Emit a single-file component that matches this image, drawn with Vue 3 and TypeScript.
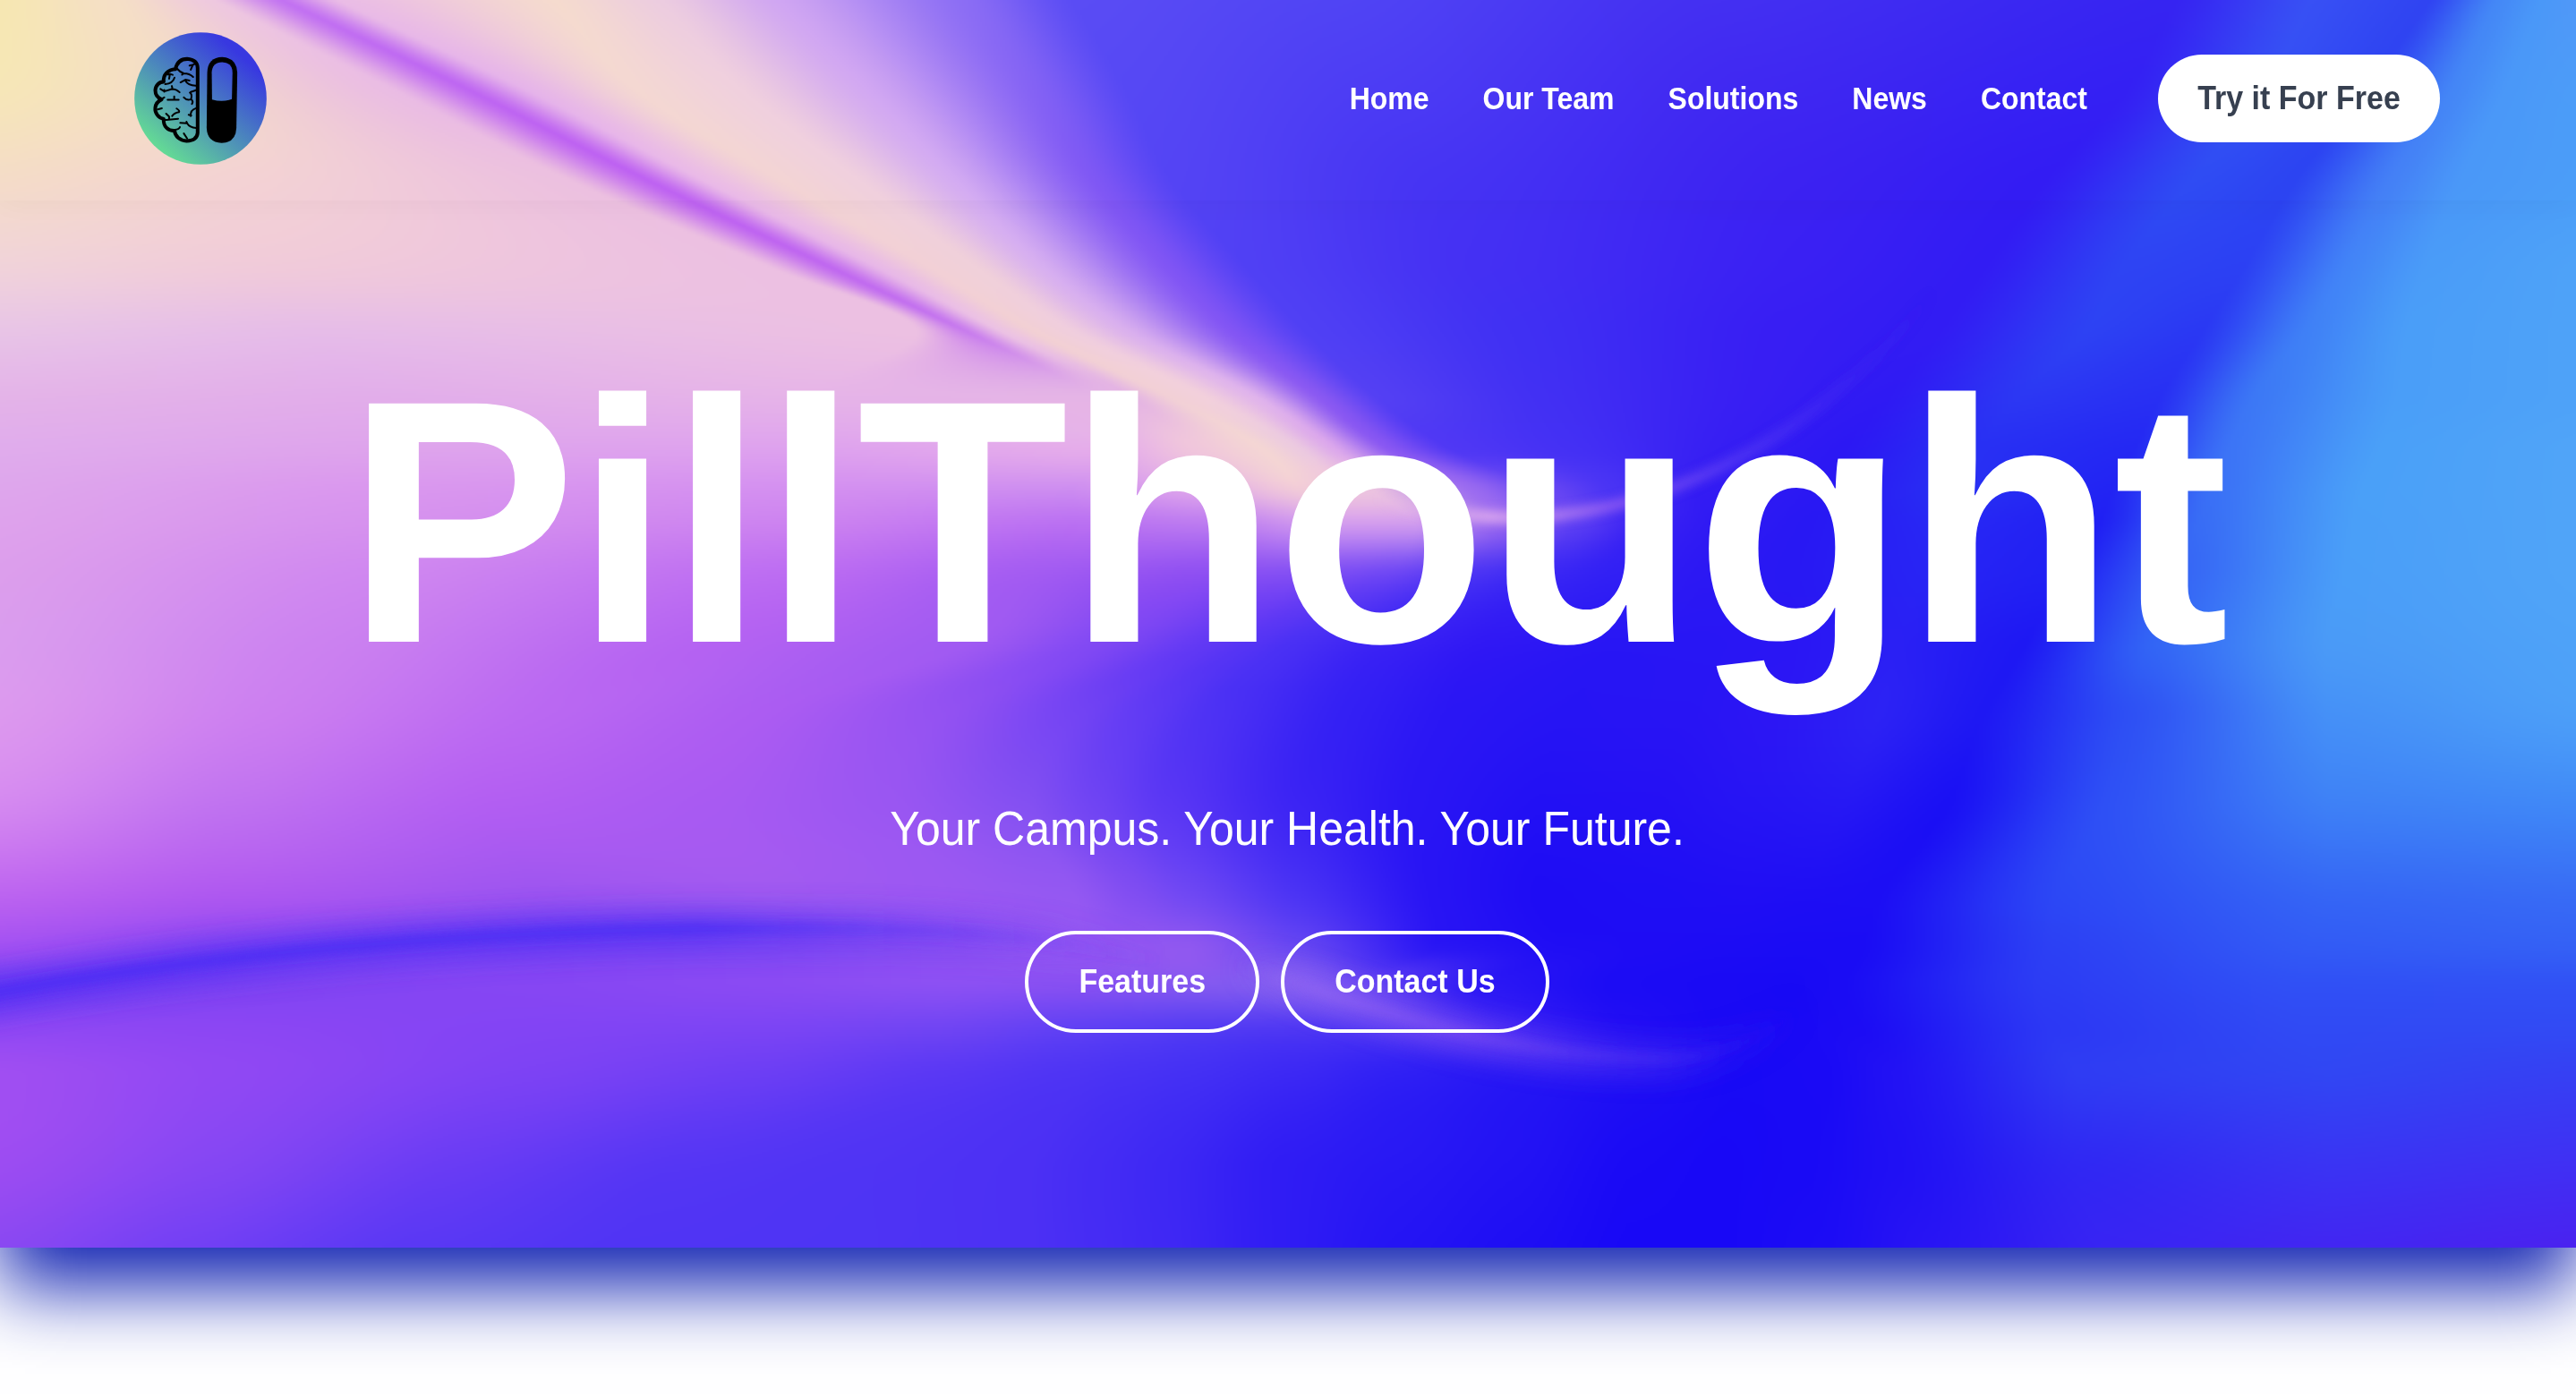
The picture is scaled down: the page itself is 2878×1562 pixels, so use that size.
<script setup lang="ts">
import { onMounted, ref } from 'vue'

const navItems: string[] = ['Home', 'Our Team', 'Solutions', 'News', 'Contact']
const actions: string[] = ['Features', 'Contact Us']

// Gradient mesh: every row holds the same number of "position:colour" stops,
// so a stop can wander sideways from row to row and form a diagonal fold.
const W = 2878
const H = 1393
const mesh: [number, string][] = [
  [0, '0:f6e7b2 130:f5dfc6 240:eec8e0 316:c272f2 378:eabce6 620:f5dbce 740:eccce0 870:d0a6f2 1084:8a6cf4 1200:5a4cf4 1500:5044f4 1900:4430f2 2430:3624f2 2580:3850f4 2715:3044f2 2790:4488f6 2840:4a98f8 2878:5098f8'],
  [100, '0:f6e6b8 200:f4dcc8 440:eabce4 524:be66f2 590:e6b4ea 710:f4d8d2 830:f0d0de 970:d2a8f2 1157:8462f4 1260:5648f4 1540:4c3cf4 1950:4028f2 2375:3420f3 2530:3450f4 2645:2e44f2 2740:4486f6 2800:4a98f8 2878:4c9cf8'],
  [200, '0:f4dcc8 280:f3d2d4 635:ecc0e0 722:be62f2 785:eabae8 870:f3d4d4 960:f0d0de 1065:d4acf2 1221:8058f4 1310:5444f4 1600:4634f3 2000:3c22f2 2285:331cf3 2450:2f4cf3 2565:2c44f2 2670:4480f6 2750:4a98f8 2878:4b9df8'],
  [300, '0:f0d2da 300:f0cada 865:ecc0e2 932:c068f0 985:e8b8e8 1040:f2d0d6 1095:f0d0da 1166:d8b0f0 1304:8256f4 1396:5040f4 1650:4430f3 2000:3a20f3 2215:321cf3 2370:2e44f3 2505:2c40f3 2620:4284f7 2710:4a9cf8 2878:4ea2f8'],
  [370, '0:e8c4e6 350:e6bce8 1025:ecc0e2 1080:c87cee 1120:ecc2e4 1155:f2d0d4 1200:f0cede 1262:dab0ee 1375:8456f4 1460:5040f4 1700:4030f3 1980:381ef3 2165:321cf3 2330:2d42f3 2460:2a38f3 2575:3f80f6 2690:4a9ef8 2878:4ea2f8'],
  [440, '0:e4b4e8 400:e2aeea 900:e6b4e8 1215:e4b4e6 1258:e4b4e4 1300:f2d0d6 1342:f2d0dc 1398:e0b4ec 1468:8c5af2 1535:5440f3 1720:4230f3 1960:381ef3 2110:2f1af3 2260:2c38f3 2415:2830f3 2520:3c78f5 2680:4a9ef8 2878:4ea2f8'],
  [500, '0:e0acec 400:dea4ec 900:dea2ee 1250:e6aeea 1330:f0c6dc 1410:f4d6d4 1450:eccae0 1490:dca8ec 1550:8a58f2 1620:5038f4 1760:4430f4 1930:361ef3 2060:2c18f3 2210:2830f3 2385:2428f3 2490:3c74f6 2660:4aa0f8 2878:50a4f8'],
  [545, '0:dea6ec 400:da98ee 900:d490f0 1200:ce8ef0 1340:e0a8ea 1450:f2ccd8 1490:f0c8dc 1530:ecc4e0 1640:9c6cf0 1720:6a48f3 1800:4a34f4 1900:341cf3 2040:2a18f3 2190:2830f3 2360:2224f3 2470:3a70f6 2640:4aa0f8 2878:50a4f8'],
  [585, '0:dea2ec 400:d692ee 900:cc82f0 1200:ba70f2 1360:bc7cf0 1480:d29cee 1530:d29cee 1580:d09cee 1680:9464f0 1760:5c3ef3 1830:3c24f3 1910:301af3 2020:2818f3 2170:2828f4 2345:2020f3 2455:386cf5 2630:4a9ff8 2878:50a4f8'],
  [640, '0:dc9eec 400:d088f0 900:bc6cf2 1150:a45cf2 1330:9050f2 1450:8450f3 1500:7a4cf4 1550:7048f4 1650:4c34f4 1720:3c28f4 1800:3220f4 1900:2c18f3 2000:2818f3 2150:2824f4 2310:2020f3 2430:3564f5 2620:4a9ef8 2878:50a4f8'],
  [720, '0:da9cee 350:cc82f0 800:b462f2 1080:a05af2 1230:8048f3 1350:6038f4 1395:5534f4 1440:4a30f4 1550:3a22f4 1660:3018f4 1800:2816f4 1900:2816f4 2000:2a16f4 2120:2a20f4 2262:1e18f3 2400:3264f5 2600:4a9af7 2878:4ea2f8'],
  [800, '0:dc98ee 300:cc7ef0 600:ba68f2 850:ac5cf2 1050:9452f2 1200:7444f3 1275:613bf4 1350:4e32f4 1500:3420f4 1620:2a16f4 1750:2614f4 1880:2814f4 1980:2c16f4 2100:2c22f4 2215:1e18f3 2380:2e50f4 2600:4590f7 2878:4c9ef8'],
  [900, '0:d488f0 250:c072f0 550:b25ef2 800:a85af2 1000:9a56f2 1150:8450f2 1225:7044f3 1300:5c38f4 1450:3c24f4 1580:2a16f4 1720:2210f4 1850:2410f4 1950:2614f4 2060:2618f4 2175:1a10f4 2350:2e50f5 2600:3e80f6 2878:4088f7'],
  [1000, '0:bc64f0 250:ae58f0 600:9c54f0 850:a05af0 1050:9c58f2 1200:9458f2 1265:824ef2 1330:7048f3 1450:4c34f4 1600:2814f4 1720:1e0cf4 1850:1e0ef4 1950:200ef4 2020:1e0ef4 2100:1c0ef4 2300:2c48f5 2600:3566f5 2878:386cf5'],
  [1060, '0:a050f2 250:8c48f2 600:8446f3 850:864af3 1050:8e50f2 1200:9658f2 1265:9357f1 1330:9058f0 1450:6848f2 1600:2c18f4 1740:200ef4 1840:1e0cf4 1930:1c0cf4 2010:1a0cf4 2080:1a0cf4 2290:2c40f4 2580:325af5 2878:3460f5'],
  [1100, '0:8046f2 250:8244f2 600:8646f3 850:8a4af3 1050:8c50f3 1200:8850f2 1265:8654f1 1330:8458f0 1430:805cf0 1520:6444f2 1660:2c18f4 1800:1c0cf4 1920:1a0af4 2000:180af4 2060:1a0cf4 2280:2c3cf4 2560:3050f5 2878:3152f5'],
  [1150, '0:9048f3 250:8c46f3 600:8244f4 850:7c44f4 1050:7044f3 1200:6040f4 1265:5a3ef4 1330:543cf3 1430:5038f3 1540:4c34f4 1680:3820f4 1820:220ef4 1920:1a0af4 2010:1a0af5 2080:1c0cf4 2290:2c38f4 2570:304af4 2878:324af4'],
  [1200, '0:a04ef2 250:9048f3 600:7c42f4 850:6c3ef4 1050:5a38f4 1200:4e34f4 1265:4932f4 1330:4430f4 1450:3c28f4 1560:3020f4 1700:2616f4 1840:1e0ef4 1940:180af5 2040:1a0af5 2120:2212f4 2320:2f3cf3 2600:3146f3 2878:3640f3'],
  [1300, '0:9c4cf2 250:8446f3 500:6a3cf4 750:5636f4 950:5034f4 1150:4c30f4 1225:452cf4 1300:3e28f4 1430:301cf4 1560:2818f4 1700:2212f4 1820:1a0af5 1920:1808f6 2020:190af5 2120:2010f4 2320:3028f3 2600:3a34f3 2878:4030f3'],
  [1393, '0:8a48f2 200:7440f4 450:5a38f4 700:5034f4 950:4e34f4 1150:4c30f4 1225:462cf4 1300:4028f4 1430:301cf4 1560:2414f4 1700:1e0ef4 1820:1808f6 1920:1808f6 2040:1c0cf5 2150:2814f4 2350:3824f3 2600:4226f2 2878:4a22f0'],
]

interface Stop { x: number; c: number[] }

const rows: { y: number; stops: Stop[] }[] = mesh.map(([y, text]) => ({
  y,
  stops: text.split(' ').map((part) => {
    const [x, hex] = part.split(':')
    return { x: Number(x), c: [0, 2, 4].map((i) => parseInt(hex.slice(i, i + 2), 16)) }
  }),
}))

// Tangent at row i, from the slopes of the rows around it.
const slope = (at: (row: number) => number, i: number): number => {
  const a = Math.max(0, i - 1)
  const b = Math.min(rows.length - 1, i + 1)
  return (at(b) - at(a)) / (rows[b].y - rows[a].y)
}

const hermite = (at: (row: number) => number, i: number, t: number): number => {
  const d = rows[i + 1].y - rows[i].y
  const t2 = t * t
  const t3 = t2 * t
  return (
    at(i) * (2 * t3 - 3 * t2 + 1) +
    slope(at, i) * d * (t3 - 2 * t2 + t) +
    at(i + 1) * (3 * t2 - 2 * t3) +
    slope(at, i + 1) * d * (t3 - t2)
  )
}

const between = (v: number, a: number, b: number): number => Math.min(Math.max(a, b), Math.max(Math.min(a, b), v))

const backdrop = ref<HTMLCanvasElement | null>(null)

onMounted(() => {
  const canvas = backdrop.value
  const ctx = canvas?.getContext('2d')
  if (!canvas || !ctx) return
  const w = canvas.width
  const h = canvas.height
  const image = ctx.createImageData(w, h)
  let r = 0
  for (let py = 0; py < h; py++) {
    const y = (py / (h - 1)) * H
    while (r < rows.length - 2 && y > rows[r + 1].y) r++
    const t = (y - rows[r].y) / (rows[r + 1].y - rows[r].y)
    const line: Stop[] = rows[r].stops.map((stop, i) => ({
      x: hermite((n) => rows[n].stops[i].x, r, t),
      c: stop.c.map((v, k) => between(hermite((n) => rows[n].stops[i].c[k], r, t), v, rows[r + 1].stops[i].c[k])),
    }))
    let s = 0
    for (let px = 0; px < w; px++) {
      const x = (px / (w - 1)) * W
      while (s < line.length - 2 && x > line[s + 1].x) s++
      const u = Math.min(1, Math.max(0, (x - line[s].x) / (line[s + 1].x - line[s].x)))
      const e = 0.6 * u + 0.4 * u * u * (3 - 2 * u)
      const o = (py * w + px) * 4
      for (let k = 0; k < 3; k++) image.data[o + k] = line[s].c[k] + (line[s + 1].c[k] - line[s].c[k]) * e
      image.data[o + 3] = 255
    }
  }
  ctx.putImageData(image, 0, 0)
})
</script>

<template>
  <main class="page">
    <section class="hero">
      <canvas ref="backdrop" class="backdrop" width="1439" height="697"></canvas>
      <svg class="backdrop" viewBox="0 0 2878 1393" fill="none" aria-hidden="true">
        <defs>
          <filter id="soft" filterUnits="userSpaceOnUse" x="-200" y="0" width="3200" height="1393"><feGaussianBlur stdDeviation="16" /></filter>
          <filter id="fine" filterUnits="userSpaceOnUse" x="-200" y="0" width="3200" height="1393"><feGaussianBlur stdDeviation="6" /></filter>
          <linearGradient id="arc" gradientUnits="userSpaceOnUse" x1="0" y1="0" x2="1300" y2="0">
            <stop offset="0" stop-color="#4a2cf4" />
            <stop offset=".6" stop-color="#4a2ef4" />
            <stop offset="1" stop-color="#6a40f4" stop-opacity="0" />
          </linearGradient>
          <linearGradient id="glow" gradientUnits="userSpaceOnUse" x1="1540" y1="0" x2="2160" y2="0">
            <stop offset="0" stop-color="#ecc4e6" stop-opacity="0" />
            <stop offset=".2" stop-color="#e4b0ee" />
            <stop offset=".42" stop-color="#9860f2" stop-opacity=".9" />
            <stop offset=".65" stop-color="#5c40f4" stop-opacity=".7" />
            <stop offset="1" stop-color="#4028f4" stop-opacity="0" />
          </linearGradient>
          <linearGradient id="wisp" gradientUnits="userSpaceOnUse" x1="1380" y1="0" x2="2020" y2="0">
            <stop offset="0" stop-color="#9064f2" stop-opacity="0" />
            <stop offset=".15" stop-color="#9468f2" />
            <stop offset=".4" stop-color="#8050f2" />
            <stop offset=".75" stop-color="#5034f2" stop-opacity=".7" />
            <stop offset="1" stop-color="#2c18f4" stop-opacity="0" />
          </linearGradient>
        </defs>
        <path d="M-80 1124C200 1070 500 1042 800 1039S1180 1048 1300 1080" stroke="url(#arc)" stroke-width="38" opacity=".75" filter="url(#soft)" />
        <path d="M-80 1122C200 1068 500 1040 800 1037S1180 1048 1300 1074" stroke="url(#arc)" stroke-width="11" opacity=".85" filter="url(#fine)" />
        <path d="M1540 556Q1610 576 1690 578C1850 576 1980 500 2060 430Q2110 390 2160 325" stroke="url(#glow)" stroke-width="11" filter="url(#fine)" />
        <path d="M1380 1076C1520 1120 1680 1186 1860 1184Q1950 1180 2020 1120" stroke="url(#wisp)" stroke-width="30" opacity=".85" filter="url(#soft)" />
        <path d="M1380 1076C1520 1120 1680 1182 1860 1182Q1950 1180 2020 1120" stroke="url(#wisp)" stroke-width="6" opacity=".8" filter="url(#fine)" />
      </svg>

      <header class="navbar">
        <svg class="logo" viewBox="62 49 441 441" fill="none" stroke="#000" stroke-linecap="round" stroke-linejoin="round">
          <defs>
            <linearGradient id="disc" gradientUnits="userSpaceOnUse" x1="150" y1="435" x2="415" y2="125">
              <stop offset="0" stop-color="#63d896" />
              <stop offset=".5" stop-color="#4b86bd" />
              <stop offset="1" stop-color="#3838e0" />
            </linearGradient>
          </defs>
          <circle cx="282.500" cy="269.500" r="220" fill="url(#disc)" stroke="none" />
          <path stroke-width="12" d="M273 168V384Q271 410 236 411C214 410 198 396 196 377C176 378 158 364 160 338C142 334 130 318 132 300Q134 282 153 273Q132 264 132 242C133 226 146 214 160 214C157 192 174 173 199 172C204 150 218 138 238 138Q272 141 273 168Z" />
          <g stroke-width="6">
            <path d="M203 169Q214 182 227 186Q246 186 258 198M227 186L221 190M246 160L257 158L270 151M257 158L250 174" />
            <path d="M165 222Q190 220 196 200M173 190L181 188L190 191M181 188L178 204M216 216L232 207L246 210M232 210Q240 226 267 227" />
            <path d="M149 238L162 246L187 238M162 241V247M187 228Q190 236 187 238Q202 238 213 249" />
            <path d="M150 273L162 266M173 274H210M195 263V274M227 266Q238 278 251 272Q256 256 247 250M250 248L268 242M251 272Q260 280 254 288" />
            <path d="M140 306L154 302M188 328Q194 318 211 315M203 303Q214 310 211 315M168 320L178 330V340M160 342Q180 340 208 337" />
            <path d="M243 324L252 326M268 302Q248 308 250 328M215 351L238 352L236 347M238 352Q246 366 268 368M197 374Q212 372 214 365M227 386L238 403" />
          </g>
          <path stroke="none" fill="#000" d="M305 183Q307 133 355 132Q403 134 405 183L402 368Q400 417 353 418Q305 416 303 368Z" />
          <path stroke="none" fill="url(#disc)" d="M320 184Q321 150 355 149Q389 150 389 184L387 272Q355 283 321 273Z" />
        </svg>
        <nav class="links">
          <a v-for="item in navItems" :key="item" class="link">{{ item }}</a>
          <a class="cta"><span class="label">Try it For Free</span></a>
        </nav>
      </header>

      <div class="intro">
        <h1 class="title">PillThought</h1>
        <p class="tagline">Your Campus. Your Health. Your Future.</p>
        <div class="actions">
          <a v-for="item in actions" :key="item" class="action"><span class="label">{{ item }}</span></a>
        </div>
      </div>
    </section>
  </main>
</template>

<style>
body {
  margin: 0;
  background: #fff;
}
</style>

<style scoped>
.page {
  height: 1562px;
  overflow: hidden;
  background: #fff;
  color: #fff;
  font-family: "Liberation Sans", Helvetica, Arial, sans-serif;
}

.hero {
  position: relative;
  height: 1394px;
  box-shadow: 0 44px 80px #1022b2;
}

.backdrop {
  position: absolute;
  inset: 0;
  width: 100%;
  height: 100%;
}

.navbar {
  position: relative;
  display: flex;
  align-items: center;
  justify-content: space-between;
  box-sizing: border-box;
  height: 224px;
  padding: 0 152px 4px 150px;
  box-shadow: 0 4px 30px rgba(0, 0, 0, 0.032);
}

.logo {
  width: 148px;
  height: 148px;
}

.links {
  display: flex;
  align-items: center;
}

.link {
  margin-right: 60px;
  font-size: 32px;
  font-weight: 700;
  white-space: nowrap;
  transform: scaleY(1.07);
}

.label {
  display: inline-block;
  transform: scaleY(1.06);
}

.cta {
  box-sizing: border-box;
  width: 315px;
  height: 98px;
  margin-left: 19px;
  border-radius: 49px;
  background: #fff;
  color: #374050;
  font-size: 34px;
  font-weight: 700;
  line-height: 96px;
  text-align: center;
  white-space: nowrap;
}

.intro {
  position: relative;
  display: flex;
  flex-direction: column;
  align-items: center;
}

.title {
  margin: 139px 4px 0 0;
  font-size: 387px;
  font-weight: 700;
  line-height: 440px;
  letter-spacing: -2.4px;
  white-space: nowrap;
}

.tagline {
  margin: 91px 2px 0 0;
  font-size: 50px;
  line-height: 64px;
  white-space: nowrap;
  transform: scaleY(1.06);
}

.actions {
  display: flex;
  gap: 24px;
  margin: 82px 2px 0 0;
}

.action {
  box-sizing: border-box;
  height: 114px;
  padding: 0 56px;
  border: 4px solid #fff;
  border-radius: 57px;
  font-size: 34px;
  font-weight: 700;
  line-height: 104px;
  white-space: nowrap;
}
</style>
